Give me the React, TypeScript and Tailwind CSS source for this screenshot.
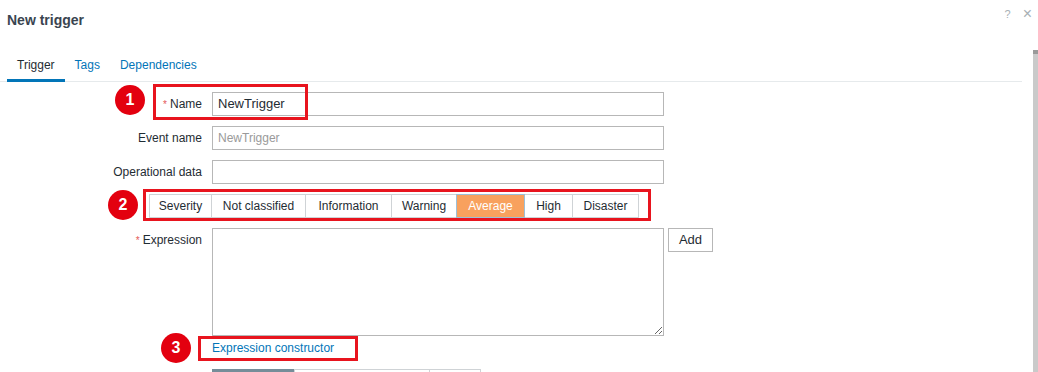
import React from "react";

const Badge = ({ n, x, y }: { n: string; x: number; y: number }) => (
  <div
    className="absolute w-[30px] h-[30px] rounded-full bg-[#e3000f] text-white font-bold text-[16px] flex items-center justify-center"
    style={{ left: x - 15, top: y - 15 }}
  >
    {n}
  </div>
);

const Box = ({ x, y, w, h }: { x: number; y: number; w: number; h: number }) => (
  <div
    className="absolute border-[3px] border-[#e8141e] pointer-events-none"
    style={{ left: x, top: y, width: w, height: h }}
  />
);

const sev: { label: string; w: string; active?: boolean }[] = [
  { label: "Severity", w: "w-[63px]" },
  { label: "Not classified", w: "w-[95px]" },
  { label: "Information", w: "w-[87px]" },
  { label: "Warning", w: "w-[66px]" },
  { label: "Average", w: "w-[69px]", active: true },
  { label: "High", w: "w-[49px]" },
  { label: "Disaster", w: "w-[67px]" },
];

export default function App() {
  return (
    <div
      className="relative w-[1038px] h-[372px] overflow-hidden bg-white text-[12px] text-[#1f2c33]"
      style={{ fontFamily: '"Liberation Sans", Arial, sans-serif' }}
    >
      {/* header */}
      <div className="h-[50px] flex items-start justify-between pl-[7px] pr-[6px]">
        <div className="pt-[12px] text-[14px] leading-[16px] font-bold text-[#3a4550]">New trigger</div>
        <div className="flex items-center gap-[12px] pt-[6px] text-[#a8b0b5]">
          <span className="text-[11px]">?</span>
          <span className="text-[16px] leading-[16px]">×</span>
        </div>
      </div>

      {/* body */}
      <div className="flex h-[322px]">
        <div className="flex-1 pr-[11px]">
          {/* tabs */}
          <div className="flex border-b border-[#e6eaec] pl-[7px]">
            <div className="px-[10px] pt-[8px] pb-[6px] leading-[14px] border-b-[3px] border-[#0275b8] -mb-[1px] text-[#1f2c33]">
              Trigger
            </div>
            <div className="px-[10px] pt-[8px] pb-[9px] leading-[14px] text-[#0275b8]">Tags</div>
            <div className="px-[10px] pt-[8px] pb-[9px] leading-[14px] text-[#0275b8]">Dependencies</div>
          </div>

          {/* form */}
          <div className="pt-[10px] flex flex-col gap-[10px]">
            <div className="flex items-center">
              <div className="w-[202px] text-right">
                <span className="text-[#e45959] text-[10px] mr-[3px]">*</span>Name
              </div>
              <div className="ml-[10px] w-[452px] h-[24px] border border-[#b7b7b7] flex items-center px-[5px] text-[13px]">
                NewTrigger
              </div>
            </div>
            <div className="flex items-center">
              <div className="w-[202px] text-right">Event name</div>
              <div className="ml-[10px] w-[452px] h-[24px] border border-[#b7b7b7] flex items-center px-[5px] text-[#9a9a9a]">
                NewTrigger
              </div>
            </div>
            <div className="flex items-center">
              <div className="w-[202px] text-right">Operational data</div>
              <div className="ml-[10px] w-[452px] h-[24px] border border-[#b7b7b7]" />
            </div>
            <div className="flex pl-[149px]">
              {sev.map((s, i) => (
                <div
                  key={s.label}
                  className={
                    "h-[24px] flex items-center justify-center border " +
                    s.w +
                    (i > 0 ? " -ml-[1px]" : "") +
                    (s.active
                      ? " bg-[#f8a15e] text-white border-[#9cbfd8] relative z-10"
                      : " bg-white border-[#cfd3d6]")
                  }
                >
                  {s.label}
                </div>
              ))}
            </div>
            <div className="flex items-start">
              <div className="w-[202px] text-right pt-[5px] leading-[14px]">
                <span className="text-[#e45959] text-[10px] mr-[3px]">*</span>Expression
              </div>
              <textarea
                readOnly
                className="ml-[10px] w-[452px] h-[108px] border border-[#b7b7b7] outline-none"
              />
              <div className="ml-[4px] w-[45px] h-[24px] border border-[#b7b7b7] flex items-center justify-center text-[13px]">
                Add
              </div>
            </div>
          </div>
          <div className="pl-[212px] mt-[5px] leading-[14px] text-[#0275b8]">Expression constructor</div>
          <div className="pl-[212px] mt-[14px] flex">
            <div className="w-[83px] h-[24px] bg-[#768d99] border border-[#768d99]" />
            <div className="w-[136px] h-[24px] border border-[#cfd3d6] -ml-[1px]" />
            <div className="w-[52px] h-[24px] border border-[#cfd3d6] -ml-[1px]" />
          </div>
        </div>
        <div className="w-[5px] flex flex-col">
          <div className="h-[4px] bg-[#9a9a9a]" />
          <div className="flex-1 bg-[#cacaca]" />
        </div>
      </div>

      {/* annotations */}
      <Box x={153} y={84} w={155} h={36} />
      <Box x={143} y={189} w={508} h={32} />
      <Box x={198} y={336} w={160} h={25} />
      <Badge n="1" x={130} y={100} />
      <Badge n="2" x={123} y={205} />
      <Badge n="3" x={176} y={348} />
    </div>
  );
}
